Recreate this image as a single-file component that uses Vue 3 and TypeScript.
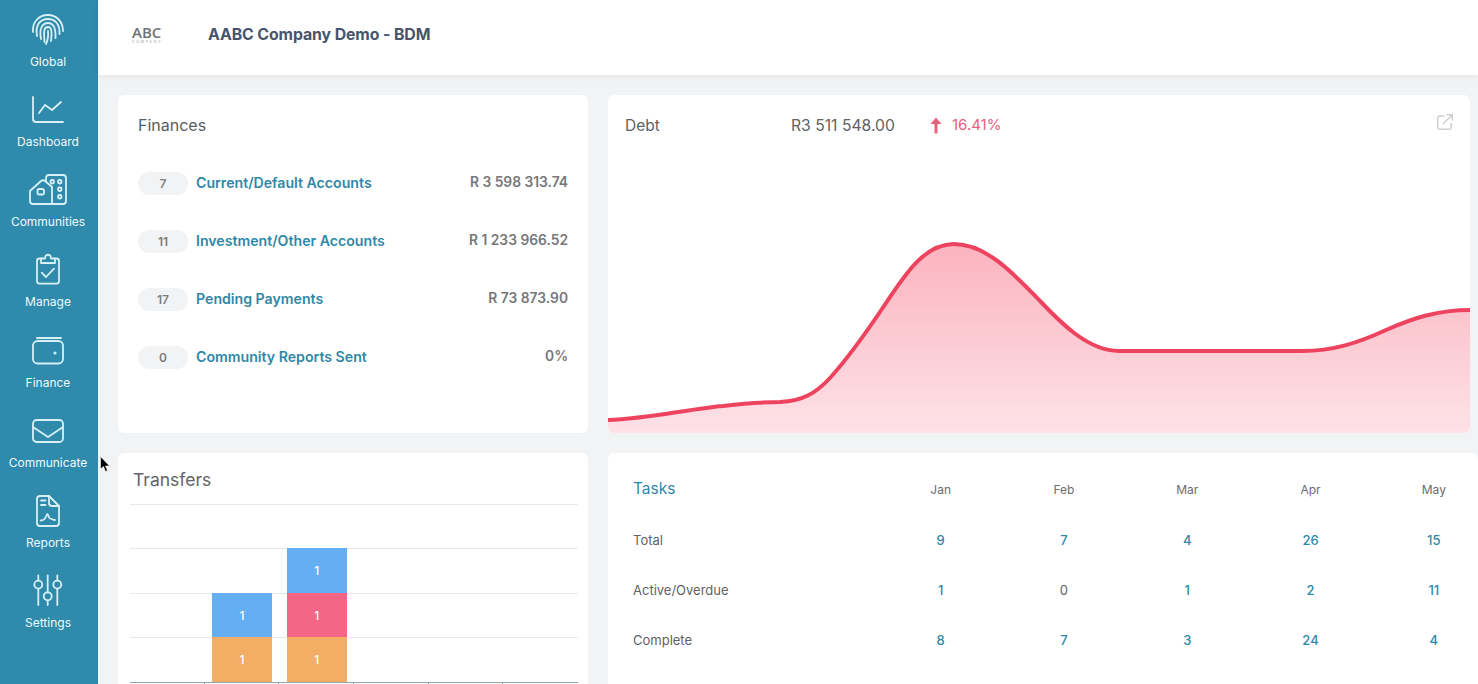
<script setup lang="ts">
const nav = [
  { label: 'Global', icon: 'finger' },
  { label: 'Dashboard', icon: 'chart' },
  { label: 'Communities', icon: 'community' },
  { label: 'Manage', icon: 'clipboard' },
  { label: 'Finance', icon: 'wallet' },
  { label: 'Communicate', icon: 'mail' },
  { label: 'Reports', icon: 'report' },
  { label: 'Settings', icon: 'sliders' },
]
const finances = [
  { count: '7', name: 'Current/Default Accounts', value: 'R 3 598 313.74' },
  { count: '11', name: 'Investment/Other Accounts', value: 'R 1 233 966.52' },
  { count: '17', name: 'Pending Payments', value: 'R 73 873.90' },
  { count: '0', name: 'Community Reports Sent', value: '0%' },
]
const months = ['Jan', 'Feb', 'Mar', 'Apr', 'May']
const tasks = [
  { name: 'Total', values: [9, 7, 4, 26, 15] },
  { name: 'Active/Overdue', values: [1, 0, 1, 2, 11] },
  { name: 'Complete', values: [8, 7, 3, 24, 4] },
]
const linePath =
  'M0 325 C40 324 80 314 115 311 C140 308 160 307 172 307 C195 306 208 298 222 283 C240 263 262 232 278 208 C295 183 315 149 346 149 C378 149 405 178 433 207 C452 227 480 256 511 256 L694 256 C725 256 750 248 778 235 C805 223 830 215 862 215'
</script>

<template>
  <div class="page">
    <aside class="sidebar">
      <div v-for="item in nav" :key="item.label" class="nav-item">
        <svg class="nav-icon" viewBox="0 0 34 34" fill="none" stroke="currentColor" stroke-width="1.8" stroke-linecap="round" stroke-linejoin="round">
          <template v-if="item.icon === 'finger'">
            <path d="M2 19 C1 9 8 2 17 2 C25 2 32 8 32 18" />
            <path d="M6 23 C4 12 9 6 17 6 C24 6 29 11 28.500 21" />
            <path d="M10 26 C8 16 11 10 17 10 C22 10 25 14 24.500 25" />
            <path d="M13.500 29 C13 20 12 14 17 14 C21 14 21 20 20 28" />
            <path d="M17 18 C17.500 24 16.500 28 15 31" />
          </template>
          <template v-else-if="item.icon === 'chart'">
            <path d="M2 4 V26 Q2 29 5 29 H32" />
            <path d="M8 20 L14 12 L21 17 L30 9" />
          </template>
          <template v-else-if="item.icon === 'community'">
            <path d="M-1 18 L10 8 Q12 6.500 14 8 L21 14 V31 H2 Q-1 31 -1 28 Z" />
            <rect x="6.500" y="16" width="6.500" height="5.500" rx="1.800" />
            <path d="M15 8 V5 Q15 2 18 2 H32 Q35 2 35 5 V28 Q35 31 32 31 H21" />
            <rect x="19.500" y="7" width="3.500" height="3.500" rx="1.500" />
            <rect x="27" y="7" width="3.500" height="3.500" rx="1.500" />
            <rect x="27" y="14.500" width="3.500" height="3.500" rx="1.500" />
            <rect x="27" y="22" width="3.500" height="3.500" rx="1.500" />
          </template>
          <template v-else-if="item.icon === 'clipboard'">
            <path d="M10 5.500 H8.500 Q6 5.500 6 8 V28 Q6 30.700 8.500 30.700 H25.500 Q28 30.700 28 28 V8 Q28 5.500 25.500 5.500 H24" />
            <path d="M10 10 V5.500 H14 C14 0.500 20 0.500 20 5.500 H24 V10 Z" />
            <path d="M10.700 19.700 L15 24 L23 15.700" />
          </template>
          <template v-else-if="item.icon === 'wallet'">
            <path d="M6 4 H30" />
            <rect x="2" y="7" width="30" height="22.500" rx="4.500" />
            <circle cx="24" cy="19" r="0.700" fill="currentColor" />
          </template>
          <template v-else-if="item.icon === 'mail'">
            <rect x="2" y="6" width="30" height="22" rx="3.500" />
            <path d="M2 13 L17 23 L32 13" />
          </template>
          <template v-else-if="item.icon === 'report'">
            <path d="M18 2 H9 Q6 2 6 5 V29 Q6 32 9 32 H25 Q28 32 28 29 V12 Z" />
            <path d="M18 2 V9 Q18 12 21 12 H28" />
            <path d="M10 6.500 H14.500 M10 11 H14.500" />
            <path d="M9.700 26.500 C12 26.500 14 25 14.800 23 C15.500 21 16 20 16.500 20 C17.500 20.500 17.500 24 19 24.500 C21 25 22 26 24 26" />
          </template>
          <template v-else>
            <path d="M7.300 1.300 V6.600 M7.300 14.600 V31" />
            <circle cx="7.300" cy="10.600" r="4" />
            <path d="M16.700 1.300 V18.300 M16.700 26.300 V31" />
            <circle cx="16.700" cy="22.300" r="4" />
            <path d="M26.300 1.300 V6.600 M26.300 14.600 V31" />
            <circle cx="26.300" cy="10.600" r="4" />
          </template>
        </svg>
        <span class="nav-label">{{ item.label }}</span>
      </div>
    </aside>

    <svg class="cursor" width="11" height="17" viewBox="0 0 11 17">
      <path d="M0.500 0.500 V13 L3.500 10.500 L5.500 15.500 L7.500 14.500 L5.500 10 H9.500 Z" fill="#000" stroke="#fff" stroke-width="0.600" />
    </svg>

    <div class="content">
      <header class="topbar">
        <div class="logo">
          <span class="logo-main">ABC</span>
          <span class="logo-sub">COMPANY</span>
        </div>
        <h1 class="company">AABC Company Demo - BDM</h1>
      </header>

      <main class="dashboard">
        <section class="card finances">
          <h2 class="card-title">Finances</h2>
          <ul class="fin-list">
            <li v-for="row in finances" :key="row.name" class="fin-row">
              <span class="pill">{{ row.count }}</span>
              <a class="fin-name">{{ row.name }}</a>
              <span class="fin-value">{{ row.value }}</span>
            </li>
          </ul>
        </section>

        <section class="card debt">
          <svg class="debt-chart" viewBox="0 0 862 338" preserveAspectRatio="none">
            <defs>
              <linearGradient id="debtFill" x1="0" y1="149" x2="0" y2="338" gradientUnits="userSpaceOnUse">
                <stop offset="0" stop-color="#fbb3bf" />
                <stop offset="1" stop-color="#fde2e7" />
              </linearGradient>
            </defs>
            <path :d="linePath + ' V338 H0 Z'" fill="url(#debtFill)" />
            <path :d="linePath" fill="none" stroke="#ee435f" stroke-width="4" />
          </svg>
          <div class="debt-head">
            <span class="debt-title">Debt</span>
            <span class="debt-amount">R3 511 548.00</span>
            <span class="debt-change">
              <svg width="12" height="17" viewBox="0 0 12 17" fill="#e8607c"><path d="M6 0.500 L11.500 7 H7.500 V16.500 H4.500 V7 H0.500 Z" /></svg>
              16.41%
            </span>
            <svg class="ext" width="16" height="16" viewBox="0 0 16 16" fill="none" stroke="#cdcfd2" stroke-width="1.500" stroke-linecap="round">
              <path d="M7 2 H2.500 Q0.800 2 0.800 3.700 V13.500 Q0.800 15.200 2.500 15.200 H12.500 Q14.200 15.200 14.200 13.500 V9.500" />
              <path d="M6.500 9.500 L15 1 M10 0.800 H15.200 V6" />
            </svg>
          </div>
        </section>

        <section class="card transfers">
          <h2 class="transfers-title">Transfers</h2>
          <div class="bars">
            <div class="grid-line" v-for="n in 4" :key="n"></div>
            <div class="bar-area">
              <div class="slot"></div>
              <div class="slot">
                <div class="seg blue">1</div>
                <div class="seg orange">1</div>
              </div>
              <div class="slot">
                <div class="seg blue">1</div>
                <div class="seg pink">1</div>
                <div class="seg orange">1</div>
              </div>
              <div class="slot"></div>
              <div class="slot"></div>
              <div class="slot"></div>
            </div>
            <div class="axis">
              <span v-for="n in 5" :key="n" class="tick"></span>
            </div>
          </div>
        </section>

        <section class="card tasks">
          <div class="task-row head">
            <span class="task-title">Tasks</span>
            <span v-for="m in months" :key="m" class="cell month">{{ m }}</span>
          </div>
          <div v-for="row in tasks" :key="row.name" class="task-row">
            <span class="task-name">{{ row.name }}</span>
            <span v-for="(v, i) in row.values" :key="i" class="cell num" :class="{ zero: v === 0 }">{{ v }}</span>
          </div>
        </section>
      </main>
    </div>
  </div>
</template>

<style>
html, body { margin: 0; background: #f2f3f5; overflow: hidden; }
</style>

<style scoped>
.page {
  width: 1478px;
  height: 684px;
  display: flex;
  overflow: hidden;
  position: relative;
  font-family: Inter, "Noto Sans", sans-serif;
  background: #f2f3f5;
}
.sidebar {
  width: 98px;
  flex: none;
  background: #2f8aab;
  color: #d6f0f6;
  display: flex;
  flex-direction: column;
  align-items: center;
  padding: 13px 2px 0 0;
  box-sizing: border-box;
}
.nav-item {
  height: 80.15px;
  flex: none;
  display: flex;
  flex-direction: column;
  align-items: center;
}
.nav-icon { width: 34px; height: 34px; flex: none; overflow: visible; }
.nav-label { font-size: 12px; line-height: 15px; margin-top: 7px; color: #eefafc; white-space: nowrap; }
.cursor { position: absolute; left: 100px; top: 456px; z-index: 3; }
.content { flex: 1; min-width: 0; display: flex; flex-direction: column; }
.topbar {
  height: 75px;
  flex: none;
  background: #fff;
  box-shadow: 0 2px 6px rgba(0, 0, 0, 0.06);
  display: flex;
  align-items: center;
  padding-left: 34px;
  box-sizing: border-box;
  position: relative;
}
.logo { width: 76px; display: flex; flex-direction: column; margin-top: -3px; }
.logo-main { font-family: "Open Sans", sans-serif; font-size: 15px; line-height: 13px; font-weight: 600; color: #6f7276; }
.logo-sub { font-size: 3.500px; line-height: 7px; letter-spacing: 1.800px; color: #9a9c9f; }
.company { margin: 0 0 6px; font-size: 15.850px; font-weight: 700; color: #47556c; letter-spacing: -0.100px; white-space: nowrap; }
.dashboard {
  flex: 1;
  min-height: 0;
  display: grid;
  grid-template-columns: 470px 1fr;
  grid-template-rows: 338px 1fr;
  gap: 20px;
  padding: 20px 0 0 20px;
  box-sizing: border-box;
  overflow: hidden;
}
.card { background: #fff; border-radius: 6px 6px 0 0; min-height: 0; overflow: hidden; }
.finances { border-radius: 6px; padding: 20px; box-sizing: border-box; }
.card-title { margin: 0; font-size: 16px; line-height: 21px; font-weight: 400; color: #5a5c60; }
.fin-list { list-style: none; margin: 36px 0 0; padding: 0; display: flex; flex-direction: column; gap: 35px; }
.fin-row { display: flex; align-items: center; height: 23px; }
.pill {
  width: 50px;
  height: 23px;
  border-radius: 12px;
  background: #f2f3f5;
  color: #7b7d80;
  font-size: 12px;
  font-weight: 600;
  line-height: 23px;
  text-align: center;
  flex: none;
}
.fin-name { margin-left: 8px; margin-top: -3px; font-size: 14.150px; font-weight: 600; color: #2f88a8; white-space: nowrap; }
.fin-value { margin-left: auto; font-size: 13.800px; font-weight: 600; color: #76787b; margin-top: -3px; white-space: nowrap; }
.debt { position: relative; margin-right: 8px; border-radius: 6px; }
.debt-head { position: absolute; inset: 0 0 auto 0; height: 60px; }
.debt-title { position: absolute; left: 17px; top: 21px; font-size: 15.500px; line-height: 20px; color: #606266; }
.debt-amount { position: absolute; left: 183px; top: 21px; font-size: 15.700px; line-height: 20px; color: #606266; white-space: nowrap; }
.debt-change { position: absolute; left: 322px; top: 20px; font-size: 15px; line-height: 20px; color: #e8607c; display: flex; align-items: center; gap: 10px; white-space: nowrap; }
.ext { position: absolute; right: 17px; top: 19px; }
.debt-chart { position: absolute; inset: 0; width: 100%; height: 100%; display: block; }
.transfers { padding: 0 10px 0 12px; border-radius: 6px 6px 0 0; }
.transfers-title { margin: 15px 0 12px 3px; font-size: 17.500px; line-height: 24px; font-weight: 400; color: #626467; }
.bars { position: relative; height: 177.600px; }
.grid-line { height: 44.400px; border-top: 1px solid #e6e7e9; box-sizing: border-box; }
.bar-area { position: absolute; inset: 0; display: grid; grid-template-columns: repeat(6, 74.700px); }
.slot { display: flex; flex-direction: column; justify-content: flex-end; align-items: center; }
.seg {
  width: 60px;
  height: 44.400px;
  color: #fff;
  font-size: 12px;
  font-weight: 500;
  display: flex;
  align-items: center;
  justify-content: center;
  flex: none;
}
.blue { background: #64aef3; }
.pink { background: #f56586; }
.orange { background: #f3ae66; }
.axis { position: absolute; left: 0; right: 0; bottom: -1px; height: 1px; background: #8ea6b2; display: flex; }
.tick { width: 74.700px; height: 3px; border-right: 1px solid #8ea6b2; box-sizing: border-box; flex: none; }
.tasks { padding: 12px 0 0 25px; }
.task-row {
  display: grid;
  grid-template-columns: 246px repeat(5, 123.300px);
  align-items: center;
  height: 50px;
  font-size: 13px;
  color: #606266;
}
.task-title { font-size: 15.500px; color: #2f88a8; margin-top: -4px; }
.cell { text-align: center; }
.month { font-size: 12px; color: #6a6c70; margin-top: -2px; }
.num { font-size: 13px; font-weight: 500; color: #2f88a8; }
.num.zero { color: #606266; font-weight: 400; }
</style>
